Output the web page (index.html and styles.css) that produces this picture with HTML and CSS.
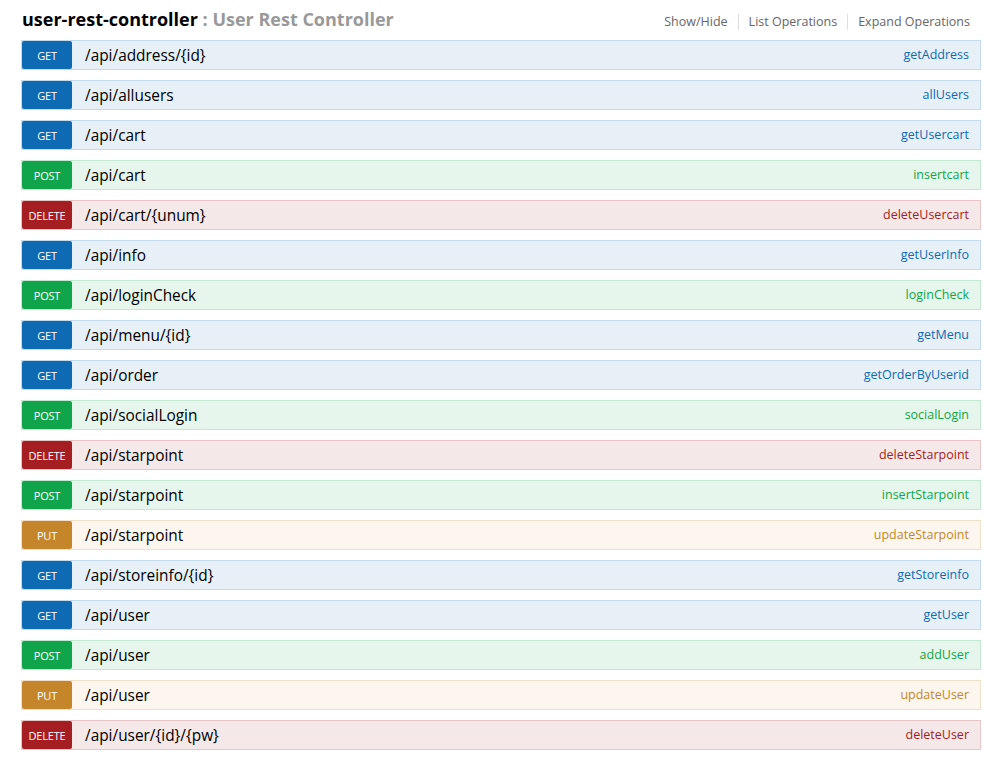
FILE: index.html
```html
<!DOCTYPE html>
<html>
<head>
<meta charset="utf-8">
<link rel="stylesheet" href="styles.css">
</head>
<body>
<div class="resource">
  <div class="res-head">
    <h2 class="res-title"><span class="res-name">user-rest-controller</span><span class="res-desc"> : User Rest Controller</span></h2>
    <ul class="options">
      <li>Show/Hide</li>
      <li>List Operations</li>
      <li>Expand Operations</li>
    </ul>
  </div>
  <ul class="ops">
    <li class="op get"><span class="method">GET</span><span class="path">/api/address/{id}</span><span class="nick">getAddress</span></li>
    <li class="op get"><span class="method">GET</span><span class="path">/api/allusers</span><span class="nick">allUsers</span></li>
    <li class="op get"><span class="method">GET</span><span class="path">/api/cart</span><span class="nick">getUsercart</span></li>
    <li class="op post"><span class="method">POST</span><span class="path">/api/cart</span><span class="nick">insertcart</span></li>
    <li class="op delete"><span class="method">DELETE</span><span class="path">/api/cart/{unum}</span><span class="nick">deleteUsercart</span></li>
    <li class="op get"><span class="method">GET</span><span class="path">/api/info</span><span class="nick">getUserInfo</span></li>
    <li class="op post"><span class="method">POST</span><span class="path">/api/loginCheck</span><span class="nick">loginCheck</span></li>
    <li class="op get"><span class="method">GET</span><span class="path">/api/menu/{id}</span><span class="nick">getMenu</span></li>
    <li class="op get"><span class="method">GET</span><span class="path">/api/order</span><span class="nick">getOrderByUserid</span></li>
    <li class="op post"><span class="method">POST</span><span class="path">/api/socialLogin</span><span class="nick">socialLogin</span></li>
    <li class="op delete"><span class="method">DELETE</span><span class="path">/api/starpoint</span><span class="nick">deleteStarpoint</span></li>
    <li class="op post"><span class="method">POST</span><span class="path">/api/starpoint</span><span class="nick">insertStarpoint</span></li>
    <li class="op put"><span class="method">PUT</span><span class="path">/api/starpoint</span><span class="nick">updateStarpoint</span></li>
    <li class="op get"><span class="method">GET</span><span class="path">/api/storeinfo/{id}</span><span class="nick">getStoreinfo</span></li>
    <li class="op get"><span class="method">GET</span><span class="path">/api/user</span><span class="nick">getUser</span></li>
    <li class="op post"><span class="method">POST</span><span class="path">/api/user</span><span class="nick">addUser</span></li>
    <li class="op put"><span class="method">PUT</span><span class="path">/api/user</span><span class="nick">updateUser</span></li>
    <li class="op delete"><span class="method">DELETE</span><span class="path">/api/user/{id}/{pw}</span><span class="nick">deleteUser</span></li>
  </ul>
</div>
</body>
</html>
```
FILE: styles.css
```css
html, body {
  margin: 0;
  padding: 0;
  background: #fff;
  font-family: "Open Sans", "DejaVu Sans", sans-serif;
}
.resource {
  padding: 6px 19px 0 21px;
}
.res-head {
  display: flex;
  align-items: center;
  justify-content: space-between;
  height: 26px;
  margin-bottom: 8px;
}
.res-title {
  margin: 0;
  font-size: 18px;
  font-weight: 700;
  line-height: 26px;
  padding-left: 1px;
}
.res-name { color: #000; }
.res-desc { color: #999; }
.options {
  list-style: none;
  margin: 0;
  padding: 0;
  display: flex;
  align-items: center;
  padding-top: 6px;
  padding-right: 11px;
}
.options li {
  font-size: 12.5px;
  color: #666;
  padding: 0 10px;
  line-height: 16px;
  border-right: 1px solid #ddd;
}
.options li:last-child {
  border-right: none;
  padding-right: 0;
}
.ops {
  list-style: none;
  margin: 0;
  padding: 0;
  display: flex;
  flex-direction: column;
  gap: 10px;
}
.op {
  display: flex;
  align-items: center;
  height: 28px;
  border: 1px solid;
}
.method {
  width: 50px;
  height: 28px;
  flex: none;
  border-radius: 2px;
  color: #fff;
  font-size: 11px;
  line-height: 30px;
  text-align: center;
  letter-spacing: -0.2px;
}
.path {
  flex: 1;
  padding-left: 13px;
  font-size: 15.4px;
  color: #000;
  line-height: 27px;
}
.nick {
  padding-right: 11px;
  font-size: 12.5px;
  line-height: 28px;
}
.get { background: #e7f0f7; border-color: #c3d9ec; }
.get .method { background: #0f6ab4; }
.get .nick { color: #0f6ab4; }
.post { background: #e7f6ec; border-color: #c3e8d1; }
.post .method { background: #10a54a; }
.post .nick { color: #10a54a; }
.delete { background: #f5e8e8; border-color: #e8c6c7; }
.delete .method { background: #a41e22; }
.delete .nick { color: #a41e22; }
.put { background: #fcf6ef; border-color: #f0e0ca; }
.put .method { background: #c5862b; }
.put .nick { color: #c5862b; }
```
